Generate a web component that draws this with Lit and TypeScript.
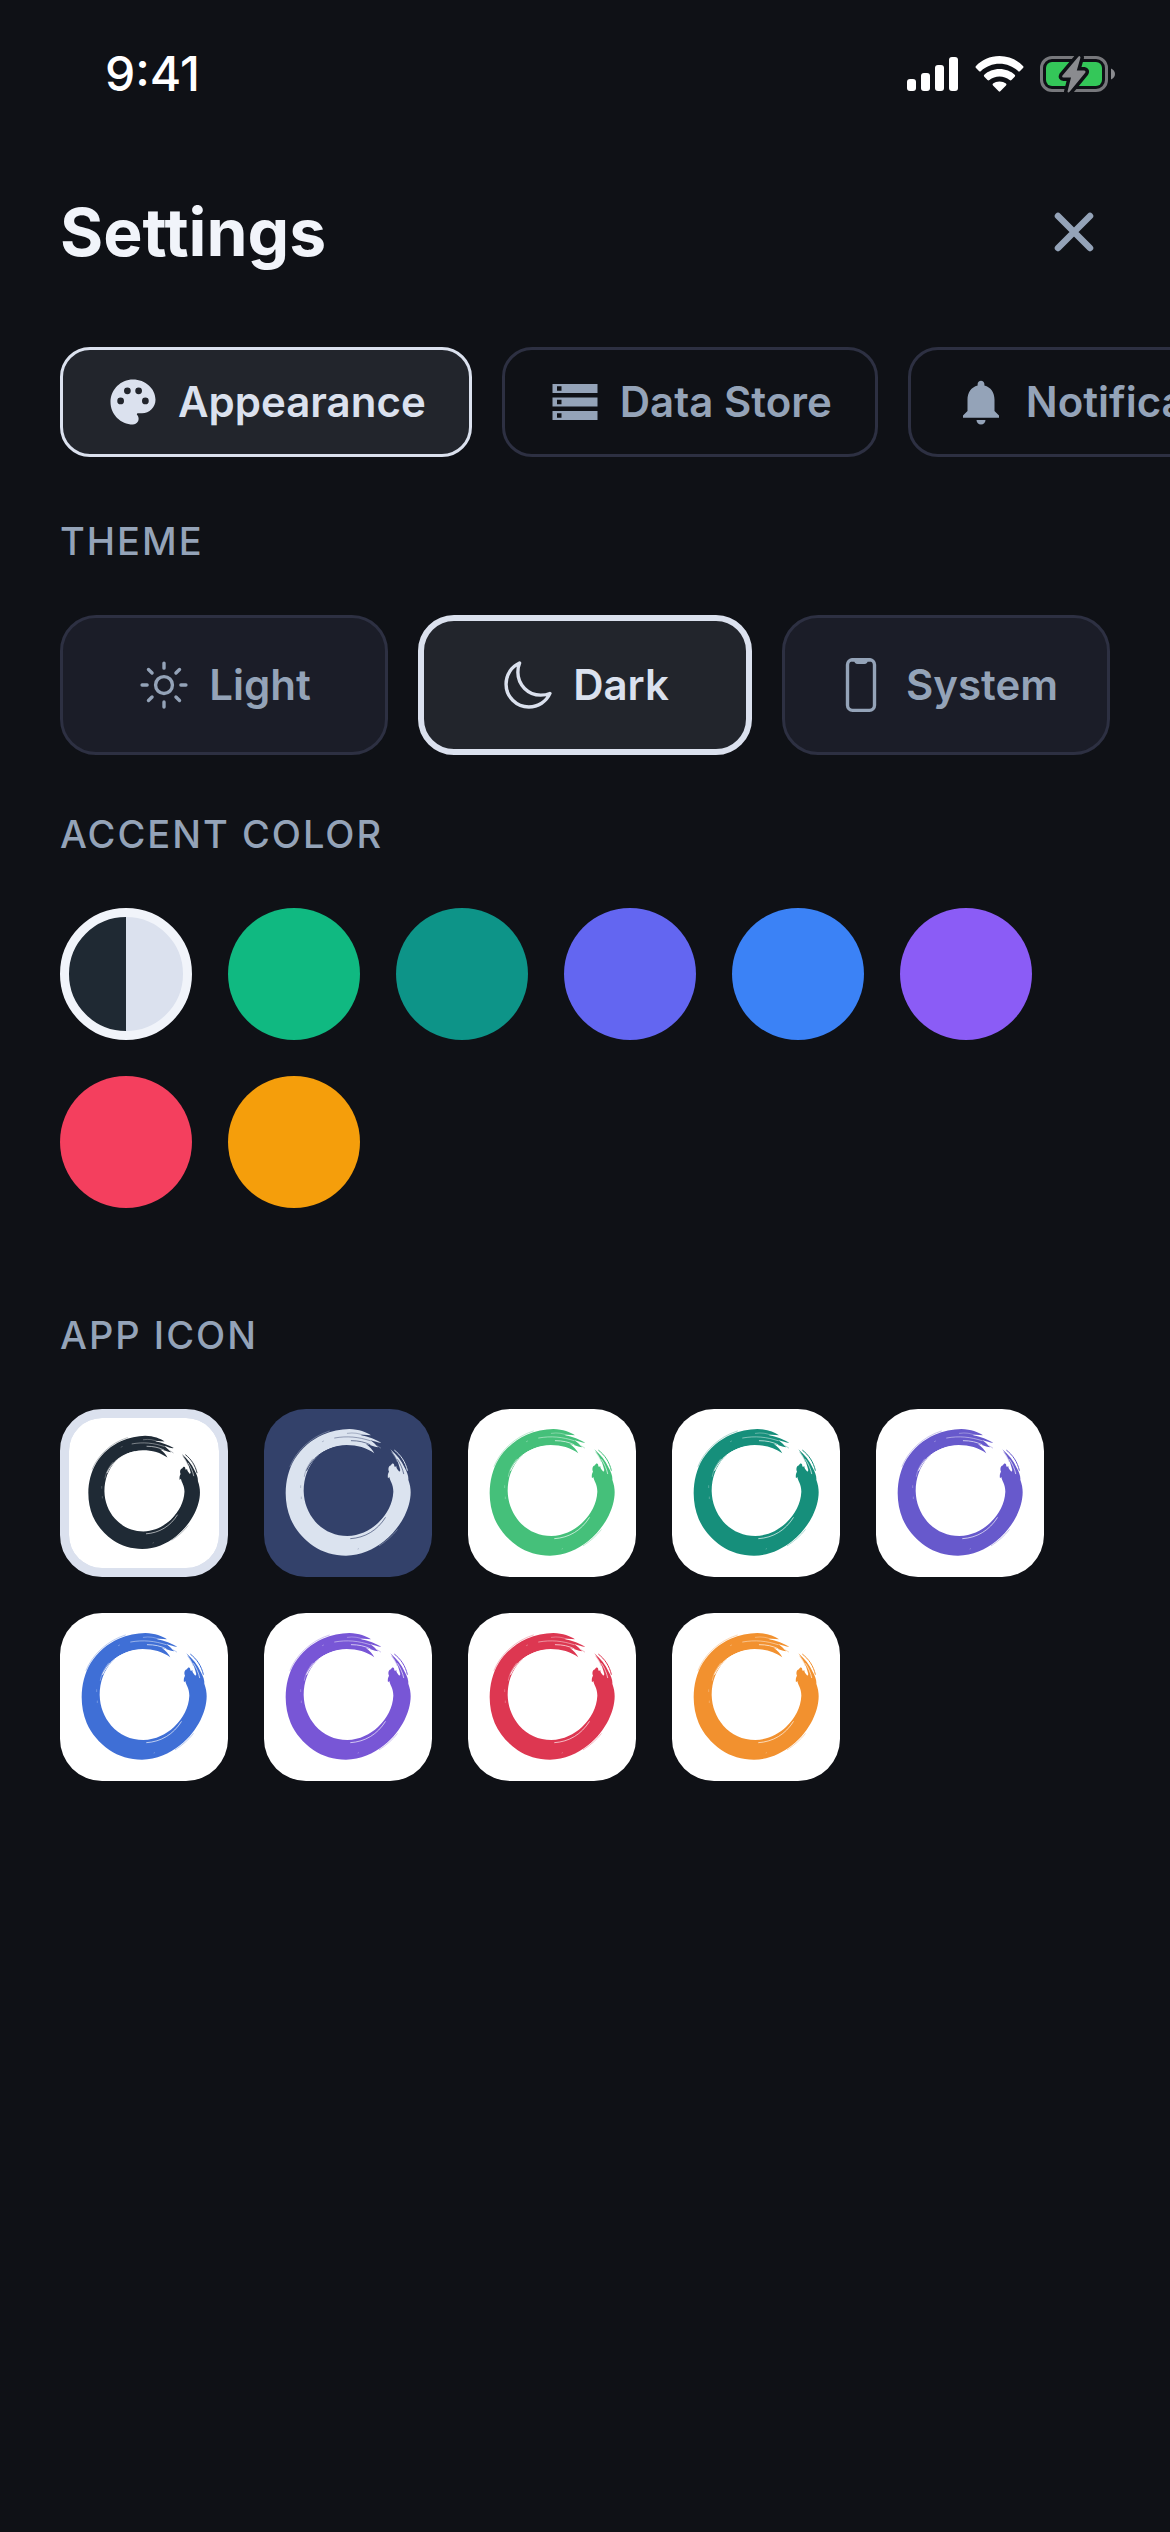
import { LitElement, html, svg, css } from "lit";
import { customElement, property, state } from "lit/decorators.js";
import { classMap } from "lit/directives/class-map.js";
import { styleMap } from "lit/directives/style-map.js";

const TABS = [
    {
        name: "Appearance",
        icon: svg`<path fill="currentColor" fill-rule="evenodd" d="M12 22C6.49 22 2 17.51 2 12S6.49 2 12 2s10 4.04 10 9c0 3.31-2.69 6-6 6h-1.77c-.28 0-.5.22-.5.5 0 .12.05.23.13.33.41.47.64 1.06.64 1.67A2.5 2.5 0 0 1 12 22zM6.5 10a1.5 1.5 0 1 0 0 3 1.5 1.5 0 0 0 0-3zm3-4.5a1.5 1.5 0 1 0 0 3 1.5 1.5 0 0 0 0-3zm5 0a1.5 1.5 0 1 0 0 3 1.5 1.5 0 0 0 0-3zm3 4.5a1.5 1.5 0 1 0 0 3 1.5 1.5 0 0 0 0-3z"/>`,
    },
    {
        name: "Data Store",
        icon: svg`<path fill="currentColor" d="M2 20h20v-4H2v4zm2-3h2v2H4v-2zM2 4v4h20V4H2zm4 3H4V5h2v2zm-4 7h20v-4H2v4zm2-3h2v2H4v-2z"/>`,
    },
    {
        name: "Notifications",
        icon: svg`<path fill="currentColor" d="M12 22c1.1 0 2-.9 2-2h-4c0 1.1.9 2 2 2zm6-6v-5c0-3.07-1.63-5.64-4.5-6.32V4c0-.83-.67-1.5-1.5-1.5s-1.5.67-1.5 1.5v.68C7.64 5.36 6 7.92 6 11v5l-2 2v1h16v-1l-2-2z"/>`,
    },
];

const THEMES = [
    {
        name: "Light",
        icon: svg`<circle cx="256" cy="256" r="80"/><path d="M256 48v48M256 416v48M403.08 108.92l-33.94 33.94M142.86 369.14l-33.94 33.94M464 256h-48M96 256H48M403.08 403.08l-33.94-33.94M142.86 142.86l-33.94-33.94"/>`,
    },
    {
        name: "Dark",
        icon: svg`<path d="M160 136c0-30.62 4.51-61.61 16-88C99.57 81.27 48 159.32 48 248c0 119.29 96.71 216 216 216 88.68 0 166.73-51.57 200-128-26.39 11.49-57.38 16-88 16-119.29 0-216-96.71-216-216z"/>`,
    },
    {
        name: "System",
        icon: svg`<rect x="128" y="16" width="256" height="480" rx="48"/><path fill="currentColor" d="M176 16h24a8 8 0 0 1 8 8 16 16 0 0 0 16 16h64a16 16 0 0 0 16-16 8 8 0 0 1 8-8h24"/>`,
    },
];

const ACCENTS = [
    { name: "Mono", color: "linear-gradient(90deg, #1f2933 50%, #dbe1ee 50%)" },
    { name: "Green", color: "#10b981" },
    { name: "Teal", color: "#0d9488" },
    { name: "Indigo", color: "#6366f1" },
    { name: "Blue", color: "#3b82f6" },
    { name: "Purple", color: "#8b5cf6" },
    { name: "Rose", color: "#f43f5e" },
    { name: "Amber", color: "#f59e0b" },
];

const APP_ICONS = [
    { name: "Ink", ink: "#1f2a35", paper: "#ffffff" },
    { name: "Night", ink: "#dbe3ef", paper: "#33416a" },
    { name: "Green", ink: "#45c07a", paper: "#ffffff" },
    { name: "Teal", ink: "#168f7b", paper: "#ffffff" },
    { name: "Indigo", ink: "#6759cc", paper: "#ffffff" },
    { name: "Blue", ink: "#3f6fd6", paper: "#ffffff" },
    { name: "Purple", ink: "#7856d6", paper: "#ffffff" },
    { name: "Red", ink: "#dd3751", paper: "#ffffff" },
    { name: "Orange", ink: "#f2912f", paper: "#ffffff" },
];

@customElement("brush-ring")
export class BrushRing extends LitElement {
    @property() ink = "#000000";
    @property() paper = "#ffffff";

    static styles = css`
        :host {
            display: block;
            width: 100%;
            height: 100%;
        }
        .ring {
            display: block;
            width: 100%;
            height: 100%;
        }
    `;

    render() {
        return html`<svg class="ring" viewBox="0 0 504 504" aria-hidden="true">
            <rect width="504" height="504" fill=${this.paper} />
            <path
                fill=${this.ink}
                d="M331 133C308 116 280 108 248 108C212 109 180 122 156 146C132 172 119 206 119 246C120 282 132 312 154 338C178 365 212 381 250 381C288 380 318 364 342 342C370 314 386 284 388 248C388 226 378 216 376 204L372 208C370 198 373 192 375 188C371 180 374 170 381 169C383 163 388 162 390 166C391 170 391 173 393 174L397 171C396 178 402 183 406 188L409 184C406 170 400 152 392 140L379 121C398 137 412 155 422 176C430 190 434 202 433 212C438 226 440 238 440 250C440 274 432 300 422 320C408 348 388 374 360 397C328 422 290 440 246 440C210 440 176 430 148 411C118 390 94 362 80 330C70 306 65 280 65 252C65 216 74 180 92 150C112 118 142 92 176 77C202 66 230 61 256 60C286 61 306 69 321 79C310 78 300 76 290 78C314 83 336 92 352 101C346 103 334 97 318 93C326 97 336 108 343 115C330 113 318 108 306 105C316 112 326 122 331 133Z"
            />
            <g fill="none" stroke=${this.ink} stroke-linecap="round">
                <path stroke-width="3" d="M392 124C410 138 424 158 430 184" />
                <path stroke-width="1" d="M341 111L350 117M384 131C390 138 396 148 400 158" />
                <path stroke-width="2" d="M78 172C96 128 138 84 196 66M346 410C368 396 386 380 400 362" opacity="0.5" />
            </g>
            <g fill="none" stroke=${this.paper} stroke-linecap="round">
                <path stroke-width="3" d="M128 184C144 148 176 122 222 113" />
                <path stroke-width="1" d="M121 202C124 184 132 168 146 150" />
                <path stroke-width="3" d="M382 254C378 290 362 322 334 346" />
                <path stroke-width="2" d="M260 389C304 386 340 364 364 326" />
                <path stroke-width="2" d="M212 87C250 80 284 84 318 95" opacity="0.7" />
                <path stroke-width="2" d="M262 95C284 95 302 99 318 107" />
                <path stroke-width="2" d="M250 73C270 70 284 73 298 79" opacity="0.5" />
                <path stroke-width="2" d="M401 152C410 166 416 180 419 194" />
                <path stroke-width="3" d="M110 230v6M112 264v5M175 98l4 -2M282 420l2 -1" opacity="0.25" />
            </g>
        </svg>`;
    }
}

@customElement("app-root")
export class AppRoot extends LitElement {
    @state() tab = "Appearance";
    @state() theme = "Dark";
    @state() accent = "Mono";
    @state() appIcon = "Ink";

    static styles = css`
        :host {
            display: block;
            min-height: 100vh;
            overflow: hidden;
            background: #0f1116;
            color: #94a3b8;
            font-family: Inter, "Liberation Sans", sans-serif;
        }
        * {
            box-sizing: border-box;
        }
        button {
            margin: 0;
            padding: 0;
            border: none;
            background: none;
            color: inherit;
            font: inherit;
            cursor: pointer;
        }
        svg {
            display: block;
            flex: none;
        }

        .status {
            display: flex;
            justify-content: space-between;
            align-items: center;
            padding: 44px 54px 0 105px;
            color: #ffffff;
            font-size: 48px;
            font-weight: 500;
            line-height: 60px;
        }
        .status-icons {
            display: flex;
            align-items: center;
            gap: 16px;
        }

        .header {
            display: flex;
            justify-content: space-between;
            align-items: center;
            padding: 92px 60px 79px;
        }
        .title {
            margin: 0;
            color: #f1f4fa;
            font-size: 66px;
            font-weight: 700;
            line-height: 72px;
        }
        .close {
            width: 72px;
            height: 72px;
        }

        .tabs {
            display: flex;
            gap: 30px;
            padding: 0 60px;
            overflow: hidden;
        }
        .tab,
        .theme {
            display: flex;
            align-items: center;
            justify-content: center;
            gap: 18px;
            border: 3px solid #2d3042;
            font-size: 42px;
            font-weight: 600;
            line-height: 54px;
            white-space: nowrap;
        }
        .tab {
            flex: none;
            padding: 25px 43px;
            border-radius: 30px;
        }
        .tab.selected,
        .theme.selected {
            border-color: #dbe1ee;
            background: #22252c;
            color: #dbe1ee;
        }

        .section {
            padding: 55px 60px 0;
        }
        .section.first {
            padding-top: 60px;
        }
        .section.last {
            padding-top: 103px;
            padding-bottom: 60px;
        }
        .label {
            margin: 0 0 50px;
            font-size: 38px;
            font-weight: 500;
            line-height: 48px;
            letter-spacing: 2px;
            text-transform: uppercase;
        }

        .themes {
            display: flex;
            gap: 30px;
        }
        .theme {
            flex: 1;
            min-height: 140px;
            border-radius: 36px;
            background: #1b1d28;
        }
        .theme.selected {
            border-width: 6px;
        }
        .outline {
            fill: none;
            stroke: currentColor;
            stroke-width: 32px;
            stroke-linecap: round;
            stroke-linejoin: round;
        }

        .choices {
            display: flex;
            flex-wrap: wrap;
            gap: 36px;
        }
        .swatch {
            width: 132px;
            height: 132px;
            border-radius: 50%;
        }
        .swatch.selected {
            border: 9px solid #f1f4fa;
        }
        .app-icon {
            width: 168px;
            height: 168px;
            border-radius: 42px;
            overflow: hidden;
        }
        .app-icon.selected {
            border: 9px solid #dbe1ee;
            background: #dbe1ee;
        }
        .art {
            display: block;
            width: 100%;
            height: 100%;
            overflow: hidden;
        }
        .selected .art {
            border-radius: 33px;
        }
    `;

    renderStatus() {
        return html`<div class="status">
            <span>9:41</span>
            <div class="status-icons">
                <svg width="52" height="36" viewBox="0 0 52 36" fill="#fff" role="img" aria-label="Signal">
                    <rect x="0" y="23" width="9" height="12" rx="3" />
                    <rect x="14" y="17" width="9" height="18" rx="3" />
                    <rect x="28" y="9" width="9" height="26" rx="3" />
                    <rect x="42" y="1" width="9" height="34" rx="3" />
                </svg>
                <svg width="49" height="36" viewBox="0 0 49 36" fill="#fff" role="img" aria-label="Wi-Fi">
                    <path d="M24.500 0C34 0 42.500 4 48 10Q49 11 48 12L44.800 15.200Q44 16 43 15C38 10.500 31.500 7.800 24.500 7.800S11 10.500 6 15Q5 16 4.200 15.200L1 12Q0 11 1 10C6.500 4 15 0 24.500 0Z" />
                    <path d="M24.500 13C30.500 13 36 15.200 39.700 18.800Q40.700 19.800 39.700 20.800L36.500 24Q35.600 24.800 34.600 24C31.800 21.800 28.300 20.500 24.500 20.500S17.200 21.800 14.400 24Q13.400 24.800 12.500 24L9.300 20.800Q8.300 19.800 9.300 18.800C13 15.200 18.500 13 24.500 13Z" />
                    <path d="M24.500 25.500C27 25.500 29.200 26.300 31 27.600Q32 28.500 31 29.500L25.300 35.300Q24.500 36 23.700 35.300L18 29.500Q17 28.500 18 27.600C19.800 26.300 22 25.500 24.500 25.500Z" />
                </svg>
                <svg width="76" height="38" viewBox="0 0 76 38" role="img" aria-label="Battery charging">
                    <rect x="1.500" y="2.500" width="65" height="33" rx="10.500" fill="none" stroke="#77787c" stroke-width="3" />
                    <rect x="6" y="7" width="56" height="24" rx="6" fill="#34c759" />
                    <path d="M71 13.500C73.500 14.500 75 16.500 75 19S73.500 23.500 71 24.500Z" fill="#8a8b8f" />
                    <path
                        d="M38.500 1.500L22.500 20.500Q21.500 22.500 23.500 22.500H31L27.500 36.500Q28 38.500 29.800 36.500L45.200 17.800Q46.200 15.800 44.200 15.500H36.800L40.500 2.500Q40 0 38.500 1.500Z"
                        fill="#8a8b8f"
                        stroke="#0f1116"
                        stroke-width="7"
                        stroke-linejoin="round"
                        paint-order="stroke"
                    />
                </svg>
            </div>
        </div>`;
    }

    render() {
        return html`
            ${this.renderStatus()}
            <header class="header">
                <h1 class="title">Settings</h1>
                <button class="close" aria-label="Close">
                    <svg width="72" height="72" viewBox="0 0 72 72">
                        <path
                            d="M20 20L52 52M52 20L20 52"
                            stroke="currentColor"
                            stroke-width="6.500"
                            stroke-linecap="round"
                        />
                    </svg>
                </button>
            </header>
            <nav class="tabs">
                ${TABS.map(
                    (t) => html`<button
                        class=${classMap({ tab: true, selected: t.name === this.tab })}
                        @click=${() => (this.tab = t.name)}
                    >
                        <svg width="54" height="54" viewBox="0 0 24 24" aria-hidden="true">${t.icon}</svg>
                        ${t.name}
                    </button>`
                )}
            </nav>
            <section class="section first">
                <h2 class="label">Theme</h2>
                <div class="themes">
                    ${THEMES.map(
                        (t) => html`<button
                            class=${classMap({ theme: true, selected: t.name === this.theme })}
                            aria-pressed=${t.name === this.theme}
                            @click=${() => (this.theme = t.name)}
                        >
                            <svg class="outline" width="54" height="54" viewBox="0 0 512 512" aria-hidden="true">
                                ${t.icon}
                            </svg>
                            ${t.name}
                        </button>`
                    )}
                </div>
            </section>
            <section class="section">
                <h2 class="label">Accent color</h2>
                <div class="choices">
                    ${ACCENTS.map(
                        (a) => html`<button
                            class=${classMap({ swatch: true, selected: a.name === this.accent })}
                            style=${styleMap({ background: a.color })}
                            aria-label=${a.name}
                            aria-pressed=${a.name === this.accent}
                            @click=${() => (this.accent = a.name)}
                        ></button>`
                    )}
                </div>
            </section>
            <section class="section last">
                <h2 class="label">App icon</h2>
                <div class="choices">
                    ${APP_ICONS.map(
                        (i) => html`<button
                            class=${classMap({ "app-icon": true, selected: i.name === this.appIcon })}
                            aria-label=${i.name}
                            aria-pressed=${i.name === this.appIcon}
                            @click=${() => (this.appIcon = i.name)}
                        >
                            <span class="art"><brush-ring ink=${i.ink} paper=${i.paper}></brush-ring></span>
                        </button>`
                    )}
                </div>
            </section>
        `;
    }
}
